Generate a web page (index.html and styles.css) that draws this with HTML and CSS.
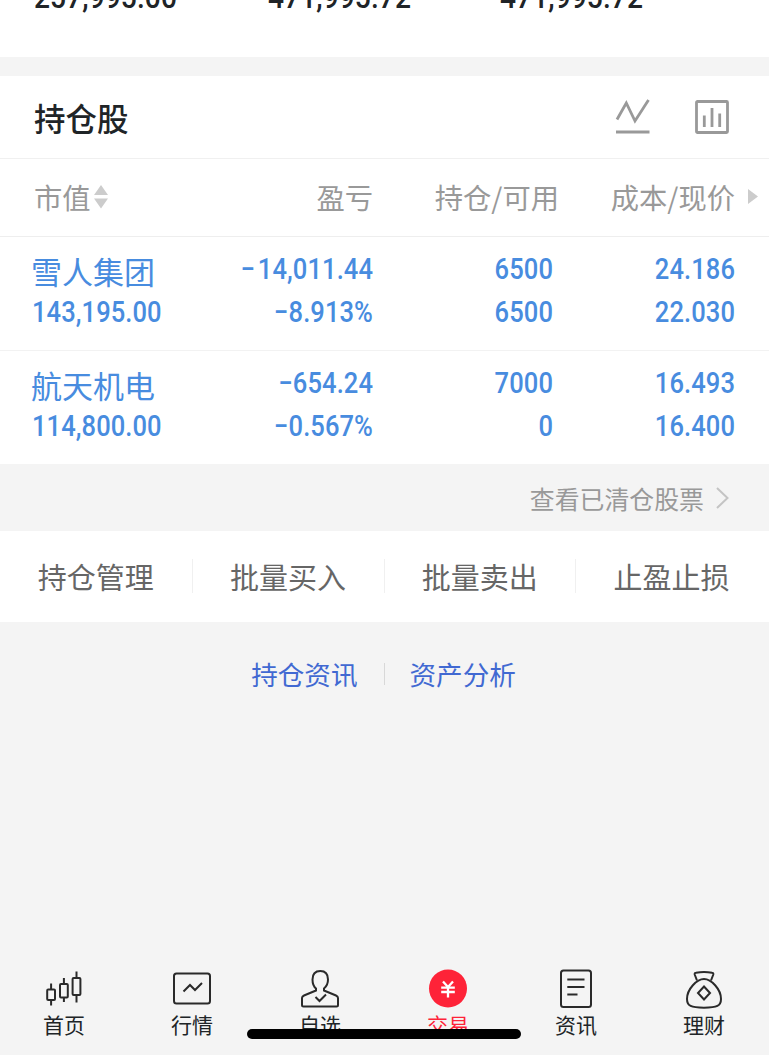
FILE: index.html
```html
<!DOCTYPE html>
<html lang="zh-CN">
<head>
    <meta charset="UTF-8">
    <meta name="viewport" content="width=device-width, initial-scale=1.0">
    <title>持仓股</title>
    <link rel="stylesheet" href="styles.css">
</head>
<body>

<!-- Asset summary -->
<div class="summary num">
    <p>257,995.00</p>
    <p>471,995.72</p>
    <p>471,995.72</p>
</div>

<!-- Holdings -->
<section class="holdings">
    <div class="title-bar">
        <h1>持仓股</h1>
        <svg class="title-icon" width="36" height="36" viewBox="0 0 36 36">
            <path d="M2 20.5 L11.3 4 L20 22 L33.5 1" />
            <path d="M1 33 H34.5" />
        </svg>
        <svg class="title-icon" width="36" height="36" viewBox="0 0 36 36">
            <rect x="2.5" y="2.5" width="31" height="31" rx="1" />
            <path d="M10.3 16.5 V28 M18 9 V28 M25.7 14.5 V28" />
        </svg>
    </div>

    <div class="row head">
        <div class="col name">市值
            <svg class="sort" width="14" height="24" viewBox="0 0 14 24">
                <path d="M7 0 L14 10 H0 Z M0 13.5 H14 L7 23.5 Z" />
            </svg>
        </div>
        <div class="col profit">盈亏</div>
        <div class="col amount">持仓/可用</div>
        <div class="col price">成本/现价</div>
        <svg class="more" width="10" height="15" viewBox="0 0 10 15">
            <path d="M0 0 L10 7.5 L0 15 Z" />
        </svg>
    </div>

    <div class="row stock">
        <div class="col name"><p class="stock-name">雪人集团</p><p class="num">143,195.00</p></div>
        <div class="col profit num"><p><span class="wide">−</span>14,011.44</p><p>−8.913%</p></div>
        <div class="col amount num"><p>6500</p><p>6500</p></div>
        <div class="col price num"><p>24.186</p><p>22.030</p></div>
    </div>
    <div class="row stock">
        <div class="col name"><p class="stock-name">航天机电</p><p class="num">114,800.00</p></div>
        <div class="col profit num"><p>−654.24</p><p>−0.567%</p></div>
        <div class="col amount num"><p>7000</p><p>0</p></div>
        <div class="col price num"><p>16.493</p><p>16.400</p></div>
    </div>
</section>

<a class="cleared">查看已清仓股票
    <svg width="13" height="22" viewBox="0 0 13 22"><path d="M1 1 L11.5 11 L1 21" /></svg>
</a>

<div class="actions">
    <a>持仓管理</a>
    <a>批量买入</a>
    <a>批量卖出</a>
    <a>止盈止损</a>
</div>

<div class="links">
    <a>持仓资讯</a>
    <a>资产分析</a>
</div>

<!-- Bottom tabs -->
<nav class="tabs">
    <a>
        <svg width="44" height="44" viewBox="0 0 44 44">
            <rect x="5.2" y="21.5" width="7.8" height="10.5" rx="1" />
            <rect x="18" y="16" width="7.8" height="13.5" rx="1" />
            <rect x="30.6" y="10" width="7.8" height="17" rx="1" />
            <path d="M9.1 15.5 V21 M9.1 32 V37.5 M21.9 10 V16 M21.9 29.5 V34 M34.5 3.5 V10 M34.5 27 V34.5" />
        </svg>
        首页
    </a>
    <a>
        <svg width="44" height="44" viewBox="0 0 44 44">
            <rect x="4" y="5.5" width="36" height="30" rx="2.5" />
            <path d="M13.5 23.5 L20 17 L25 22 L32 15" />
        </svg>
        行情
    </a>
    <a>
        <svg width="44" height="44" viewBox="0 0 44 44">
            <path d="M18 20.5 V22.5 L6 27.5 Q4 28.3 4 30 V37 Q4 38.5 5.5 38.5 H38.5 Q40 38.5 40 37 V30 Q40 28.3 38 27.5 L26 22.5 V20.5 C28.5 18.5 30 15.5 30 11.5 C30 6 27 3 22.3 3 C17.5 3 14.5 6 14.5 11.5 C14.5 15.5 15.5 18.5 18 20.5 Z" />
            <path d="M17.5 29 L21.5 33 L28 26.5" />
        </svg>
        自选
    </a>
    <a class="active">
        <svg width="44" height="44" viewBox="0 0 44 44">
            <circle cx="22" cy="20.5" r="19" />
            <path d="M17 13.5 L22 19 L27 13.5 M15.2 19.6 H28.8 M15.2 24 H28.8 M22 19 V29.5" />
        </svg>
        交易
    </a>
    <a>
        <svg width="44" height="44" viewBox="0 0 44 44">
            <rect x="7" y="2.5" width="30" height="36.5" rx="2.5" />
            <path d="M13.3 11.5 H30.5 M13.3 19 H30.5 M13.3 26.5 H23.5" />
        </svg>
        资讯
    </a>
    <a>
        <svg width="44" height="44" viewBox="0 0 44 44">
            <path d="M15 12.5 L12.7 6.5 Q12.3 5 14 4.8 Q22 3 30 4.8 Q31.7 5 31.3 6.5 L29 12.5" />
            <path d="M22 11 C15 11 5 21 5 31 C5 38 9 39.7 22 39.7 C35 39.7 39 38 39 31 C39 21 29 11 22 11 Z" />
            <path d="M22 18.5 L28 25 L22 31.5 L16 25 Z" />
        </svg>
        理财
    </a>
</nav>
<div class="home-bar"></div>

</body>
</html>
```

FILE: styles.css
```css
* {
    box-sizing: border-box;
}

body {
    font-family: 'Noto Sans CJK SC', sans-serif;
    margin: 0;
    height: 1055px;
    display: flex;
    flex-direction: column;
    overflow: hidden;
    background-color: #f4f4f4;
    color: #202427;
}

h1, p {
    margin: 0;
}

svg {
    fill: none;
    flex-shrink: 0;
}

.num {
    font-family: Roboto, sans-serif;
    font-size: 29px;
    font-weight: 500;
    letter-spacing: 0.1px;
}

/* narrow digits */
.num p, p.num {
    transform: scaleX(0.88);
    transform-origin: right;
}

.summary p, p.num {
    transform-origin: left;
}

.summary {
    height: 57px;
    padding-left: 34px;
    display: grid;
    grid-template-columns: 234px 232px 1fr;
    background: #fff;
    line-height: 36px;
    font-size: 32px;
}

.summary p {
    margin-top: -21px;
    height: 36px;
}

.holdings {
    margin-top: 19px;
    background: #fff;
}

.title-bar {
    height: 83px;
    padding: 0 39px 1px 34px;
    display: flex;
    align-items: center;
    gap: 43px;
    border-bottom: 1px solid #f0f0f0;
}

h1 {
    flex: 1;
    font-size: 31.5px;
    font-weight: 500;
    line-height: 40px;
}

.title-icon {
    stroke: #999;
    stroke-width: 2.8;
}

.row {
    display: grid;
    grid-template-columns: 130px 211px 180px 1fr;
    padding: 0 34px 0 32px;
    text-align: right;
}

.head {
    position: relative;
    height: 78px;
    padding-bottom: 2px;
    align-items: center;
    border-bottom: 1px solid #eee;
    font-size: 28.3px;
    color: #999;
}

.head .name {
    display: flex;
    align-items: center;
    gap: 3px;
    padding-left: 2px;
}

.head .amount {
    margin-right: -6px;
}

.sort, .more {
    fill: #ccc;
}

.more {
    position: absolute;
    right: 11px;
    top: 30px;
}

.name {
    text-align: left;
    white-space: nowrap;
}

.stock {
    height: 114px;
    padding-top: 11px;
    line-height: 43px;
    color: #488cdf;
    border-bottom: 1px solid #f2f2f2;
}

.stock:last-child {
    height: 113px;
    border-bottom: none;
}

.stock-name {
    height: 43px;
    margin-left: -1px;
    padding-top: 1px;
    font-size: 31px;
}

.wide {
    margin-right: 3px;
}

.cleared {
    height: 67px;
    padding-right: 40px;
    display: flex;
    align-items: center;
    justify-content: flex-end;
    gap: 12px;
    font-size: 24.9px;
    color: #999;
}

.cleared svg {
    stroke: #c4c4c4;
    stroke-width: 2;
}

.actions {
    height: 91px;
    padding: 0 2px 1px 0;
    display: grid;
    grid-template-columns: repeat(4, 1fr);
    align-items: center;
    background: #fff;
    font-size: 29px;
    line-height: 34px;
    text-align: center;
    color: #666;
}

.actions a + a {
    border-left: 1px solid #f0f0f0;
}

.links {
    margin-top: 35px;
    padding-right: 2px;
    display: flex;
    justify-content: center;
    font-size: 26.6px;
    line-height: 34px;
    color: #4169d2;
}

.links a {
    padding: 0 26px;
}

.links a + a {
    background: linear-gradient(#d8d8d8, #d8d8d8) no-repeat left center / 1px 22px;
}

.tabs {
    margin-top: auto;
    height: 87px;
    padding-right: 1px;
    display: grid;
    grid-template-columns: repeat(6, 1fr);
    font-size: 21px;
    line-height: 25px;
}

.tabs a {
    display: flex;
    flex-direction: column;
    align-items: center;
}

.tabs svg {
    stroke: #2a2a2a;
    stroke-width: 2;
}

.tabs .active {
    color: #fe2338;
}

.active circle {
    fill: #fe2338;
    stroke: none;
}

.tabs .active path {
    stroke: #fff;
    stroke-width: 2.3;
}

/* iOS home indicator */
.home-bar {
    position: absolute;
    left: 247px;
    top: 1029px;
    width: 274px;
    height: 10px;
    border-radius: 5px;
    background: #000;
}
```
